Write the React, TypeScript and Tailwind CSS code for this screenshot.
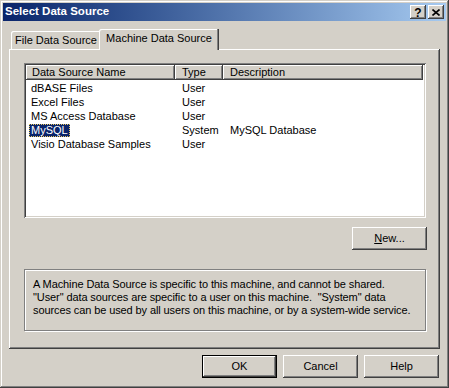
import React from 'react'

const FONT = "font-['Liberation_Sans',Arial,sans-serif]"

const RAISED =
  'shadow-[inset_-1px_-1px_0_#404040,inset_1px_1px_0_#ffffff,inset_-2px_-2px_0_#808080,inset_2px_2px_0_#d4d0c8]'

const ROWS = [
  { name: 'dBASE Files', type: 'User', desc: '' },
  { name: 'Excel Files', type: 'User', desc: '' },
  { name: 'MS Access Database', type: 'User', desc: '' },
  { name: 'MySQL', type: 'System', desc: 'MySQL Database', selected: true },
  { name: 'Visio Database Samples', type: 'User', desc: '' },
]

function CaptionButton({ children }: { children: React.ReactNode }) {
  return (
    <div
      className={`w-[16px] h-[14px] bg-[#d4d0c8] flex items-center justify-center ${RAISED}`}
    >
      {children}
    </div>
  )
}

function PushButton({ children, isDefault }: { children: React.ReactNode; isDefault?: boolean }) {
  const border = isDefault
    ? 'shadow-[inset_0_0_0_1px_#000000,inset_-2px_-2px_0_#404040,inset_2px_2px_0_#ffffff,inset_-3px_-3px_0_#808080]'
    : RAISED
  return (
    <div className={`w-[75px] h-[23px] bg-[#d4d0c8] flex items-center justify-center ${border}`}>
      {children}
    </div>
  )
}

function HeaderCell({ w, label, pad }: { w: string; label: string; pad: string }) {
  return (
    <div
      className={`${w} h-[15px] flex items-center ${pad} bg-[#d4d0c8] shadow-[inset_-1px_-1px_0_#404040,inset_1px_1px_0_#ffffff,inset_-2px_-2px_0_#808080]`}
    >
      {label}
    </div>
  )
}

export default function App() {
  return (
    <div
      className={`w-[449px] h-[388px] bg-[#d4d0c8] p-[3px] flex flex-col text-[11px] leading-none text-black ${FONT} shadow-[inset_-1px_-1px_0_#404040,inset_1px_1px_0_#d4d0c8,inset_-2px_-2px_0_#808080,inset_2px_2px_0_#ffffff]`}
    >
      {/* title bar */}
      <div className="h-[18px] flex items-center pl-[2px] pr-[2px] bg-gradient-to-r from-[#0a246a] to-[#a6caf0]">
        <span className="font-bold text-white text-[11.5px]">Select Data Source</span>
        <div className="ml-auto flex gap-[2px]">
          <CaptionButton>
            <span className="font-bold text-[12px] leading-none mt-[1px]">?</span>
          </CaptionButton>
          <CaptionButton>
            <svg width="8" height="7" viewBox="0 0 8 7">
              <path d="M0.5 0.5L7.5 6.5M7.5 0.5L0.5 6.5" stroke="#000" strokeWidth="1.6" />
            </svg>
          </CaptionButton>
        </div>
      </div>

      <div className="px-[6px] mt-[8px]">
        {/* tabs */}
        <div className="flex items-end h-[20px] pl-[2px]">
          <div className="w-[90px] h-[18px] flex items-center justify-center rounded-tl-[2px] bg-[#d4d0c8] shadow-[inset_-1px_0_0_#404040,inset_-2px_0_0_#808080,inset_1px_1px_0_#ffffff] pt-[1px]">
            File Data Source
          </div>
          <div className="relative z-10 -ml-[2px] -mb-[1px] w-[120px] h-[21px] flex items-center justify-center rounded-tl-[2px] bg-[#d4d0c8] shadow-[inset_-1px_0_0_#404040,inset_-2px_0_0_#808080,inset_1px_1px_0_#ffffff] pb-[2px]">
            Machine Data Source
          </div>
        </div>

        {/* panel */}
        <div className="h-[300px] pl-[15px] pt-[14px] shadow-[inset_-1px_-1px_0_#404040,inset_1px_1px_0_#ffffff,inset_-2px_-2px_0_#808080]">
          <div className="w-[402px] flex flex-col">
            {/* list view */}
            <div className="h-[155px] bg-white p-[2px] shadow-[inset_1px_1px_0_#808080,inset_-1px_-1px_0_#ffffff,inset_2px_2px_0_#404040,inset_-2px_-2px_0_#d4d0c8]">
              <div className="flex">
                <HeaderCell w="w-[149px]" label="Data Source Name" pad="pl-[6px]" />
                <HeaderCell w="w-[48px]" label="Type" pad="pl-[7px]" />
                <HeaderCell w="w-[200px]" label="Description" pad="pl-[7px]" />
              </div>
              <div className="pt-[1px]">
                {ROWS.map((r) => (
                  <div key={r.name} className="flex h-[14px] items-center">
                    <div className="w-[149px] pl-[3px]">
                      {r.selected ? (
                        <span className="inline-block px-[2px] py-[1px] bg-[#0a246a] text-white outline-1 outline-dotted outline-[#e8c860] -outline-offset-1">
                          {r.name}
                        </span>
                      ) : (
                        <span className="inline-block px-[2px]">{r.name}</span>
                      )}
                    </div>
                    <div className="w-[48px] pl-[7px]">{r.type}</div>
                    <div className="w-[200px] pl-[7px]">{r.desc}</div>
                  </div>
                ))}
              </div>
            </div>

            <div className="self-end -mr-[1px] mt-[9px]">
              <PushButton>
                <span>
                  <span className="underline">N</span>ew...
                </span>
              </PushButton>
            </div>

            {/* description group */}
            <div className="mt-[19px] h-[62px] border border-[#808080] shadow-[1px_1px_0_#ffffff,inset_1px_1px_0_#ffffff] pl-[8px] pt-[8px] leading-[13px] tracking-[-0.1px] whitespace-pre">
              <div>A Machine Data Source is specific to this machine, and cannot be shared.</div>
              <div>{'"User" data sources are specific to a user on this machine.  "System" data'}</div>
              <div>sources can be used by all users on this machine, or by a system-wide service.</div>
            </div>
          </div>
        </div>
      </div>

      {/* dialog buttons */}
      <div className="flex justify-end gap-[6px] mt-[6px] pr-[7px]">
        <PushButton isDefault>OK</PushButton>
        <PushButton>Cancel</PushButton>
        <PushButton>Help</PushButton>
      </div>
    </div>
  )
}
